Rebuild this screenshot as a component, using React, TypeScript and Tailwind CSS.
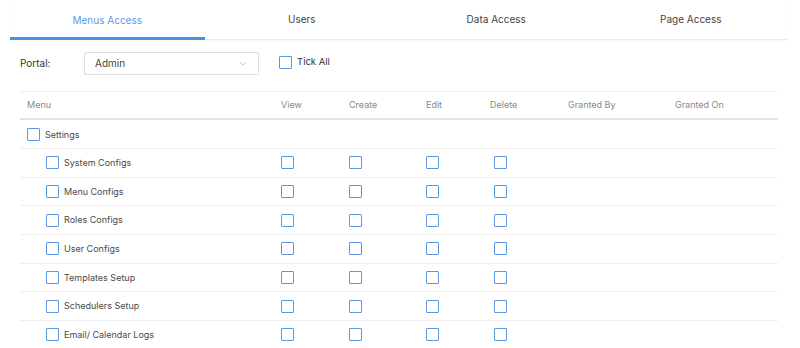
import { ChevronDown } from 'lucide-react';

const tabs = ['Menus Access', 'Users', 'Data Access', 'Page Access'];

const items = [
  'System Configs',
  'Menu Configs',
  'Roles Configs',
  'User Configs',
  'Templates Setup',
  'Schedulers Setup',
  'Email/ Calendar Logs',
];

const cols = 'grid grid-cols-[261px_68px_77px_64px_78px_107px_1fr] items-center';

function Box() {
  return <span className="block w-[13px] h-[13px] border-[1.5px] border-[#5b97e3] rounded-[1px] bg-white shrink-0" />;
}

export default function App() {
  return (
    <div className="w-[800px] h-[348px] overflow-hidden bg-white text-[#4a4a4a] font-['Inter','Noto_Sans',sans-serif]">
      <div className="mx-[10px] w-[778px]">
        {/* tabs */}
        <div className="grid grid-cols-4 h-[40px] border-b border-[#ececec] shadow-[0_1px_2px_rgba(0,0,0,0.04)]">
          {tabs.map((t, i) => (
            <div
              key={t}
              className={
                'flex items-center justify-center text-[10px] ' +
                (i === 0 ? 'text-[#5b9be6] border-b-[3px] border-[#4a90e2] pt-[3px] -mb-px' : 'text-[#444]')
              }
            >
              {t}
            </div>
          ))}
        </div>

        {/* portal row */}
        <div className="flex items-center pl-[10px] mt-[12px] h-[23px]">
          <span className="w-[64px] text-[10px] text-[#333]">Portal:</span>
          <div className="w-[175px] h-[23px] border border-[#ddd] rounded-[2px] flex items-center justify-between pl-[10px] pr-[10px] text-[10px] text-[#444]">
            <span>Admin</span>
            <ChevronDown className="w-[10px] h-[10px] text-[#999]" strokeWidth={1.5} />
          </div>
          <div className="flex items-center ml-[20px] -mt-[3px] gap-[5px] text-[9.5px] text-[#333]">
            <Box />
            <span>Tick All</span>
          </div>
        </div>

        {/* table */}
        <div className="mx-[10px] mt-[16px] border-t border-[#eee]">
          <div className={cols + ' h-[28px] border-b-2 border-[#e2e2e2] text-[9px] text-[#888]'}>
            <span className="pl-[7px]">Menu</span>
            <span>View</span>
            <span>Create</span>
            <span>Edit</span>
            <span>Delete</span>
            <span>Granted By</span>
            <span>Granted On</span>
          </div>
          <div className={cols + ' h-[29px] border-b border-[#eee] text-[9px]'}>
            <div className="flex items-center gap-[5px] pl-[7px] pt-[1px]">
              <Box />
              <span>Settings</span>
            </div>
          </div>
          {items.map(name => (
            <div key={name} className={cols + ' h-[28.67px] border-b border-[#eee] text-[9px]'}>
              <div className="flex items-center gap-[5px] pl-[26px]">
                <Box />
                <span>{name}</span>
              </div>
              <Box />
              <Box />
              <Box />
              <div className="pl-[4px]"><Box /></div>
              <span />
              <span />
            </div>
          ))}
        </div>
      </div>
    </div>
  );
}
